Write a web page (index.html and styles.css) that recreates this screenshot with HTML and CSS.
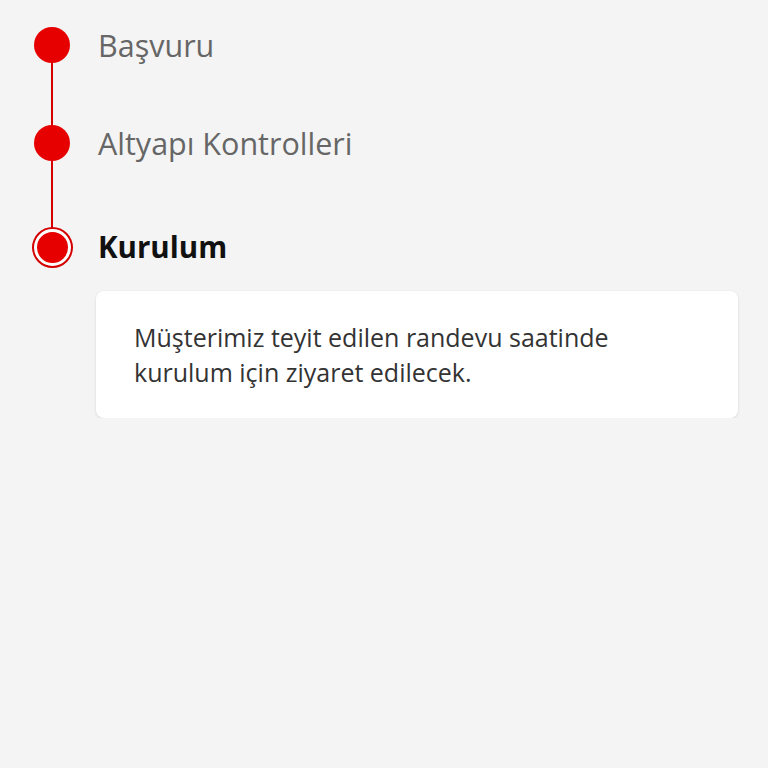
FILE: index.html
```html
<!DOCTYPE html>
<html lang="tr">
<head>
    <meta charset="UTF-8">
    <meta name="viewport" content="width=device-width, initial-scale=1.0">
    <title>Kurulum Durumu</title>
    <link rel="stylesheet" href="styles.css">
</head>
<body>
    <div class="timeline">
        <div class="step done">
            <div class="marker"><span class="dot"></span></div>
            <div class="step-title">Başvuru</div>
        </div>
        <div class="step done">
            <div class="marker"><span class="dot"></span></div>
            <div class="step-title">Altyapı Kontrolleri</div>
        </div>
        <div class="step current">
            <div class="marker"><span class="dot"></span></div>
            <div class="step-body">
                <div class="step-title">Kurulum</div>
                <div class="card">
                    Müşterimiz teyit edilen randevu saatinde<br>
                    kurulum için ziyaret edilecek.
                </div>
            </div>
        </div>
    </div>
</body>
</html>
```

FILE: styles.css
```css
body {
    margin: 0;
    background: #f4f4f4;
    font-family: 'Open Sans', 'Lato', sans-serif;
}

.timeline {
    padding: 27px 30px 0 30px;
}

.step {
    display: flex;
    position: relative;
}

.step.done {
    height: 98px;
}

.step.current {
    margin-top: 6px;
}

/* connector line between dots */
.step.done::before {
    content: "";
    position: absolute;
    left: 21px;
    top: 20px;
    width: 2px;
    height: 102px;
    background: #d40000;
}

.marker {
    width: 44px;
    flex: none;
    display: flex;
    justify-content: center;
    position: relative;
}

.dot {
    width: 36px;
    height: 36px;
    border-radius: 50%;
    background: #e60000;
}

.step-title {
    margin-left: 24px;
    margin-top: -1px;
    font-size: 30.5px;
    line-height: 38px;
    color: #666666;
}

.current .dot {
    width: 31px;
    height: 31px;
    border: 3px solid #ffffff;
    box-shadow: 0 0 0 2px #d40000;
}

.current .step-title {
    font-weight: bold;
    font-size: 29.5px;
    color: #111111;
    margin-top: -1px;
}

.step-body {
    flex: 1;
}

.card {
    margin: 25px 0 0 22px;
    background: #ffffff;
    border-radius: 8px;
    box-shadow: 0 1px 3px rgba(0, 0, 0, 0.12);
    padding: 29px 38px 28px;
    font-size: 25px;
    line-height: 35px;
    color: #333333;
}
```
